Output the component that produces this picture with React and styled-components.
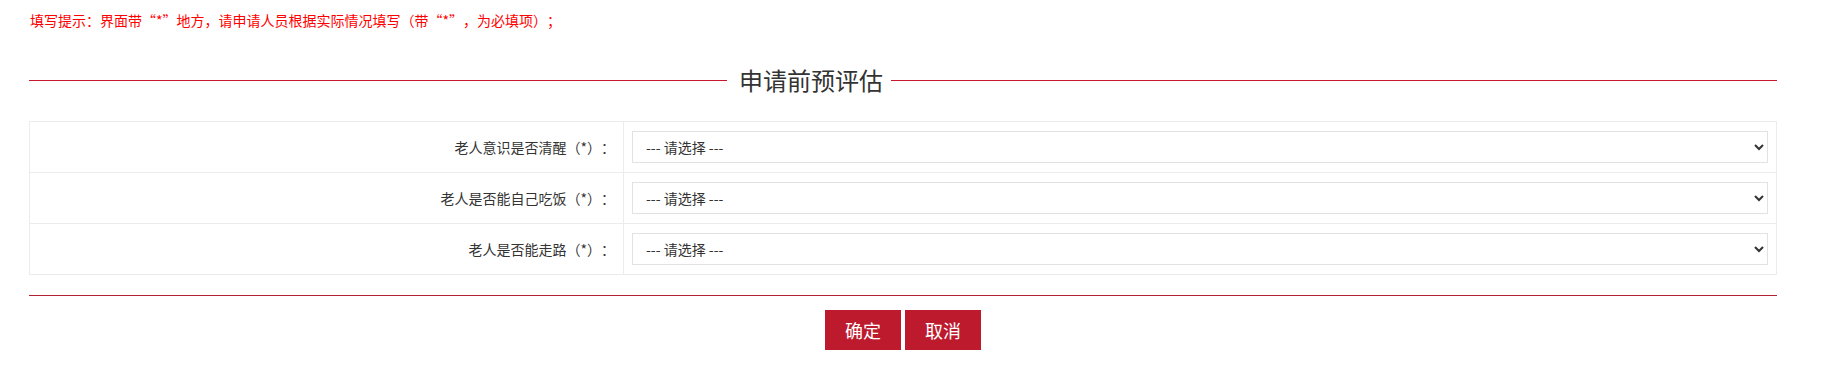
import React from "react";
import styled, { createGlobalStyle } from "styled-components";

const GlobalStyle = createGlobalStyle`
  html, body { margin: 0; padding: 0; background: #fff; }
  body {
    font-family: "Microsoft YaHei", "Noto Sans CJK SC", "Noto Sans", sans-serif;
    color: #333;
    text-spacing-trim: space-all;
  }
  * { box-sizing: border-box; }
`;

const Page = styled.div`
  width: 1847px;
  padding-top: 10px;
`;

const Hint = styled.p`
  margin: 0;
  padding-left: 30px;
  font-size: 14px;
  line-height: 20px;
  color: #ff0000;
`;

const Form = styled.form`
  width: 1748px;
  margin: 0 0 0 29px;
`;

const TitleRow = styled.div`
  display: flex;
  align-items: center;
  height: 40px;
  margin-top: 30px;
`;

const Rule = styled.div`
  height: 1px;
  background: #c8162e;
  flex: ${(p) => (p.$width ? `0 0 ${p.$width}px` : "1 1 auto")};
`;

const Title = styled.h2`
  margin: 0;
  padding: 0 8px 0 12px;
  font-size: 24px;
  font-weight: normal;
  line-height: 40px;
  color: #333;
  white-space: nowrap;
`;

const Grid = styled.div`
  display: grid;
  grid-template-columns: 594px 1fr;
  margin-top: 21px;
  border-top: 1px solid #ececec;
  border-left: 1px solid #ececec;
`;

const Cell = styled.div`
  height: 51px;
  border-right: 1px solid #ececec;
  border-bottom: 1px solid #ececec;
  padding: 9px 8px;
  display: flex;
  align-items: center;
  justify-content: ${(p) => (p.$label ? "flex-end" : "flex-start")};
  font-size: 14px;
  color: #333;
`;

const Select = styled.select`
  width: 100%;
  height: 32px;
  border: 1px solid #e2e2e2;
  border-radius: 0;
  background: #fff;
  padding: 0 8px 0 9px;
  font-family: inherit;
  font-size: 14px;
  color: #333;
  outline: none;
`;

const Divider = styled.div`
  margin-top: 20px;
  height: 1px;
  background: #b3202f;
`;

const Actions = styled.div`
  display: flex;
  justify-content: center;
  gap: 4px;
  margin-top: 14px;
`;

const Button = styled.button`
  width: 76px;
  height: 40px;
  border: none;
  border-radius: 0;
  background: #be1a2e;
  color: #fff;
  font-family: inherit;
  font-size: 18px;
  padding: 0;
  cursor: pointer;
`;

const rows = [
  "老人意识是否清醒（*）：",
  "老人是否能自己吃饭（*）：",
  "老人是否能走路（*）：",
];

export default function App() {
  return (
    <Page>
      <GlobalStyle />
      <Hint>填写提示：界面带“*”地方，请申请人员根据实际情况填写（带“*”，为必填项）；</Hint>
      <Form onSubmit={(e) => e.preventDefault()}>
        <TitleRow>
          <Rule $width={698} />
          <Title>申请前预评估</Title>
          <Rule />
        </TitleRow>
        <Grid>
          {rows.map((label) => (
            <React.Fragment key={label}>
              <Cell $label>{label}</Cell>
              <Cell>
                <Select defaultValue="">
                  <option value="">--- 请选择 ---</option>
                  <option value="1">是</option>
                  <option value="0">否</option>
                </Select>
              </Cell>
            </React.Fragment>
          ))}
        </Grid>
        <Divider />
        <Actions>
          <Button type="submit">确定</Button>
          <Button type="button">取消</Button>
        </Actions>
      </Form>
    </Page>
  );
}
